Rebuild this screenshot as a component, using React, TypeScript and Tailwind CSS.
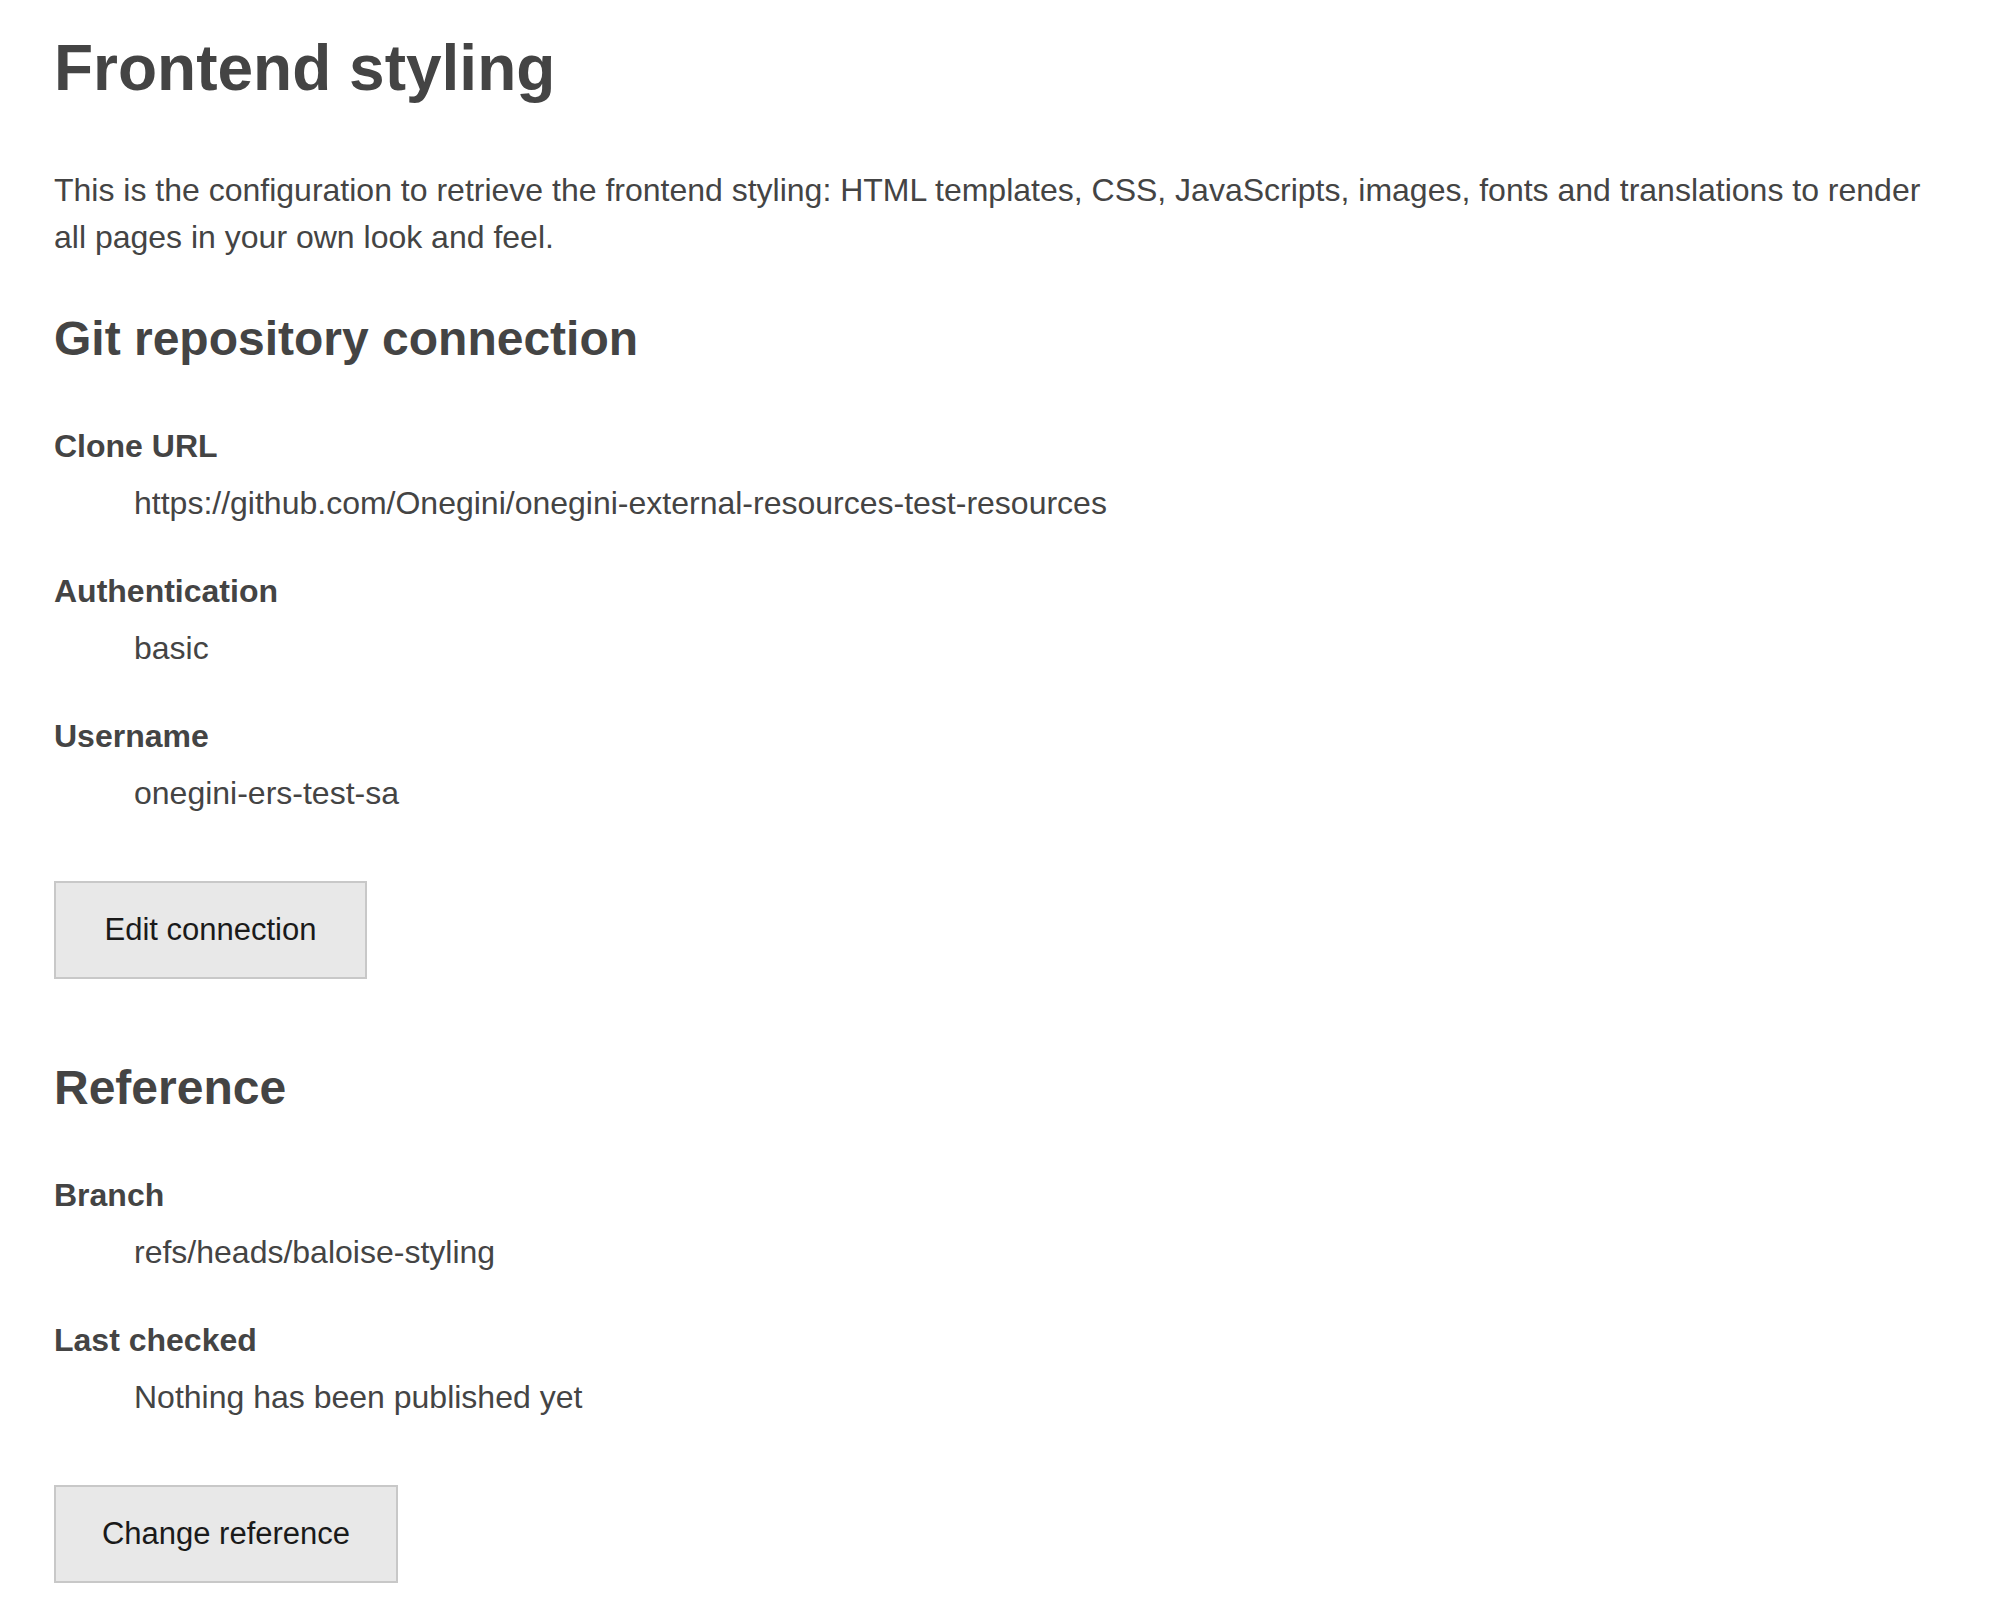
import React from 'react';

interface FieldProps {
  label: string;
  value: string;
  first?: boolean;
}

const Field: React.FC<FieldProps> = ({ label, value, first }) => (
  <div className={first ? '' : 'mt-[40px]'}>
    <dt className="text-[32px] font-bold leading-[48px]">{label}</dt>
    <dd className="ml-[80px] mt-[9px] text-[32px] leading-[48px]">{value}</dd>
  </div>
);

const ActionButton: React.FC<{ label: string; width: string }> = ({ label, width }) => (
  <button
    className={`mt-[64px] h-[98px] ${width} border-2 border-[#c8c8c8] bg-[#e8e8e8] text-[31px] text-[#1a1a1a] flex items-center justify-center`}
  >
    {label}
  </button>
);

export default function App() {
  return (
    <div className="min-h-screen bg-white px-[54px] pt-[32px] font-['Liberation_Sans',Arial,sans-serif] text-[#444444]">
      <h1 className="text-[64px] font-bold leading-[72px]">Frontend styling</h1>
      <p className="mt-[63px] text-[32px] leading-[47px]">
        This is the configuration to retrieve the frontend styling: HTML templates, CSS, JavaScripts, images, fonts and
        translations to render all pages in your own look and feel.
      </p>

      <h2 className="mt-[50px] text-[48px] font-bold leading-[56px]">Git repository connection</h2>
      <dl className="mt-[55px]">
        <Field first label="Clone URL" value="https://github.com/Onegini/onegini-external-resources-test-resources" />
        <Field label="Authentication" value="basic" />
        <Field label="Username" value="onegini-ers-test-sa" />
      </dl>
      <ActionButton label="Edit connection" width="w-[313px]" />

      <h2 className="mt-[81px] text-[48px] font-bold leading-[56px]">Reference</h2>
      <dl className="mt-[55px]">
        <Field first label="Branch" value="refs/heads/baloise-styling" />
        <Field label="Last checked" value="Nothing has been published yet" />
      </dl>
      <ActionButton label="Change reference" width="w-[344px]" />
    </div>
  );
}
